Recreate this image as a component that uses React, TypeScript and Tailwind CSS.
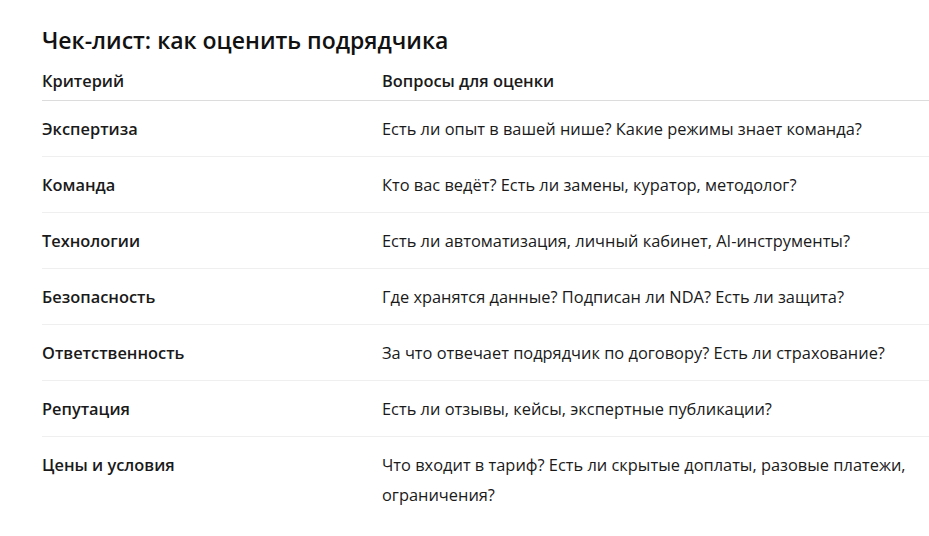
const rows = [
  { label: "Экспертиза", text: "Есть ли опыт в вашей нише? Какие режимы знает команда?" },
  { label: "Команда", text: "Кто вас ведёт? Есть ли замены, куратор, методолог?" },
  { label: "Технологии", text: "Есть ли автоматизация, личный кабинет, AI-инструменты?" },
  { label: "Безопасность", text: "Где хранятся данные? Подписан ли NDA? Есть ли защита?" },
  { label: "Ответственность", text: "За что отвечает подрядчик по договору? Есть ли страхование?" },
  { label: "Репутация", text: "Есть ли отзывы, кейсы, экспертные публикации?" },
  {
    label: "Цены и условия",
    text: "Что входит в тариф? Есть ли скрытые доплаты, разовые платежи, ограничения?",
  },
];

export default function App() {
  return (
    <div className="min-h-[536px] bg-white pl-[42px] pt-[24px] font-['Open_Sans',sans-serif] text-[#1a1a1a]">
      <h2 className="text-[23px] font-semibold leading-[32px] text-[#111]">
        Чек-лист: как оценить подрядчика
      </h2>
      <div className="mt-[10px] w-[887px]">
        <div className="flex border-b border-[#dcdcdc] pb-[4px] text-[16.4px] font-semibold leading-[30px]">
          <div className="w-[340px] shrink-0">Критерий</div>
          <div className="flex-1">Вопросы для оценки</div>
        </div>
        {rows.map((r, i) => (
          <div
            key={r.label}
            className={`flex pt-[13px] pb-[12px] text-[16.4px] leading-[30px] ${
              i < rows.length - 1 ? "border-b border-[#efefef]" : ""
            }`}
          >
            <div className="w-[340px] shrink-0 font-semibold">{r.label}</div>
            <div className="w-[540px]">{r.text}</div>
          </div>
        ))}
      </div>
    </div>
  );
}
